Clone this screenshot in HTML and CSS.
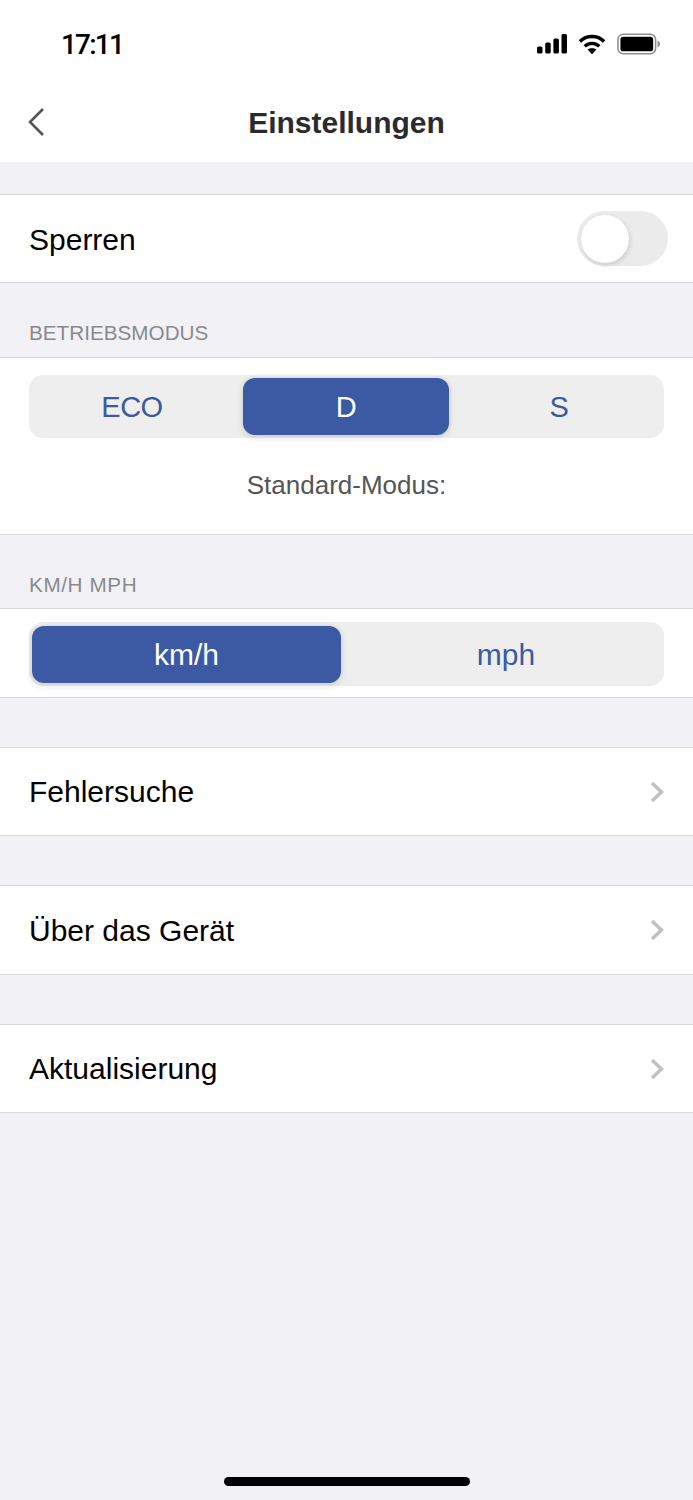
FILE: index.html
```html
<!DOCTYPE html>
<html lang="de">
<head>
    <meta charset="UTF-8">
    <meta name="viewport" content="width=device-width, initial-scale=1.0">
    <title>Einstellungen</title>
    <link rel="stylesheet" href="styles.css">
</head>
<body>
    <div class="page">
        <div class="status-bar">
            <span class="time">17:11</span>
            <div class="status-icons">
                <svg class="icon-signal" width="30" height="20" viewBox="0 0 30 20" fill="#000">
                    <rect x="0" y="12.5" width="5.5" height="7" rx="1.5"/>
                    <rect x="8.2" y="8.5" width="5.5" height="11" rx="1.5"/>
                    <rect x="16.4" y="4.5" width="5.5" height="15" rx="1.5"/>
                    <rect x="24.5" y="0" width="5.5" height="19.5" rx="1.5"/>
                </svg>
                <svg class="icon-wifi" width="28" height="21" viewBox="0 0 29 21" fill="none" stroke="#000" stroke-width="3.6">
                    <path d="M2 7.4C9.2 .6 19.8 .6 27 7.4"/>
                    <path d="M6.9 12.4c4.5-4.1 10.7-4.1 15.2 0"/>
                    <path d="M14.5 20.6l-4.6-4.8c2.6-2 6.6-2 9.2 0z" fill="#000" stroke="none"/>
                </svg>
                <svg class="icon-battery" width="43" height="22" viewBox="0 0 44 22">
                    <rect x="1" y="1" width="38.5" height="20" rx="5.5" fill="none" stroke="#8e8e8e" stroke-width="1.6"/>
                    <rect x="3.5" y="3.5" width="33.5" height="15" rx="3" fill="#000"/>
                    <path d="M41.5 7.5c1.6.5 2.5 2 2.5 3.5s-.9 3-2.5 3.5z" fill="#8e8e8e"/>
                </svg>
            </div>
        </div>

        <div class="nav-bar">
            <svg class="back" width="18" height="30" viewBox="0 0 18 30" fill="none" stroke="#555" stroke-width="2.6">
                <path d="M16 2 L3 15 L16 28"/>
            </svg>
            <h1>Einstellungen</h1>
        </div>

        <div class="section first">
            <div class="row">
                <span>Sperren</span>
                <div class="switch"><div class="knob"></div></div>
            </div>
        </div>

        <div class="section-label">BETRIEBSMODUS</div>
        <div class="section mode-box">
            <div class="segment three">
                <div class="seg-item">ECO</div>
                <div class="seg-item active">D</div>
                <div class="seg-item">S</div>
            </div>
            <p class="hint">Standard-Modus:</p>
        </div>

        <div class="section-label units">KM/H MPH</div>
        <div class="section unit-box">
            <div class="segment two">
                <div class="seg-item active">km/h</div>
                <div class="seg-item">mph</div>
            </div>
        </div>

        <div class="section spaced">
            <div class="row">
                <span>Fehlersuche</span>
                <svg class="chevron" width="14" height="22" viewBox="0 0 14 22" fill="none" stroke="#c0c0c2" stroke-width="3.4"><path d="M2 2 L11.5 11 L2 20"/></svg>
            </div>
        </div>
        <div class="section spaced">
            <div class="row tall">
                <span>Über das Gerät</span>
                <svg class="chevron" width="14" height="22" viewBox="0 0 14 22" fill="none" stroke="#c0c0c2" stroke-width="3.4"><path d="M2 2 L11.5 11 L2 20"/></svg>
            </div>
        </div>
        <div class="section spaced">
            <div class="row">
                <span>Aktualisierung</span>
                <svg class="chevron" width="14" height="22" viewBox="0 0 14 22" fill="none" stroke="#c0c0c2" stroke-width="3.4"><path d="M2 2 L11.5 11 L2 20"/></svg>
            </div>
        </div>

        <div class="home-area">
            <div class="home-bar"></div>
        </div>
    </div>
</body>
</html>
```

FILE: styles.css
```css
* {
    margin: 0;
    padding: 0;
    box-sizing: border-box;
    font-family: "Liberation Sans", Arial, sans-serif;
}

body {
    background-color: #f1f1f6;
}

.page {
    height: 1500px;
    display: flex;
    flex-direction: column;
    overflow: hidden;
}

.status-bar {
    height: 88px;
    background-color: white;
    display: flex;
    justify-content: space-between;
    align-items: center;
    padding: 0 33px 0 61px;
}

.time {
    font-family: Roboto, "Liberation Sans", sans-serif;
    font-size: 28px;
    font-weight: 500;
    color: #000;
    letter-spacing: -1.8px;
}

.status-icons {
    display: flex;
    align-items: center;
    gap: 11px;
}

.nav-bar {
    height: 74px;
    padding-bottom: 4px;
    background-color: white;
    display: flex;
    align-items: center;
    justify-content: center;
    position: relative;
}

.nav-bar h1 {
    font-size: 30px;
    font-weight: bold;
    color: #2b2b2e;
}

.back {
    position: absolute;
    left: 27px;
    top: 19px;
}

.section {
    background-color: white;
    border-top: 1px solid #d9d9dc;
    border-bottom: 1px solid #d9d9dc;
}

.section.first {
    margin-top: 32px;
}

.section.first .row span,
.row.tall span {
    padding-top: 2px;
}

.section.spaced {
    margin-top: 49px;
}

.row {
    height: 87px;
    display: flex;
    align-items: center;
    justify-content: space-between;
    padding: 0 25px 0 29px;
    font-size: 30px;
    color: #000;
}

.row.tall {
    height: 88px;
}

.chevron {
    margin-right: 4px;
}

.switch {
    width: 91px;
    height: 55px;
    border-radius: 28px;
    background-color: #ebebeb;
    padding: 4px;
}

.knob {
    width: 48px;
    height: 48px;
    border-radius: 50%;
    background-color: white;
    box-shadow: 1px 2px 5px rgba(0,0,0,0.14);
}

.section-label {
    height: 74px;
    padding: 38px 29px 0;
    font-size: 20.7px;
    line-height: 24px;
    color: #8a8a8e;
}

.section-label.units {
    height: 73px;
    letter-spacing: 0.6px;
}

.mode-box {
    height: 178px;
    padding: 17px 29px 0;
}

.unit-box {
    height: 90px;
    padding: 13px 29px 0;
}

.segment {
    background-color: #eeeeee;
    border-radius: 14px;
    display: flex;
    gap: 7px;
}

.segment.three {
    height: 63px;
    padding: 3px 2px 3px 0;
}

.segment.two {
    height: 64px;
    padding: 4px 0 3px 3px;
}

.seg-item {
    flex: 1;
    display: flex;
    align-items: center;
    justify-content: center;
    font-size: 30px;
    color: #3b5aa3;
    border-radius: 12px;
}

.three .seg-item {
    padding-top: 2px;
    font-size: 29px;
    letter-spacing: -0.5px;
}

.three .seg-item.active {
    margin-left: 1px;
}

.two .seg-item.active {
    flex: none;
    width: 309px;
}

.seg-item.active {
    background-color: #3b5aa3;
    color: white;
    box-shadow: 0 0 4px rgba(0,0,0,0.1), 0 3px 8px rgba(0,0,0,0.1);
}

.hint {
    margin-top: 33px;
    text-align: center;
    font-size: 26px;
    line-height: 28px;
    color: #555;
}

.home-area {
    margin-top: auto;
    height: 23px;
}

.home-bar {
    width: 246px;
    height: 9px;
    margin: 0 auto;
    background-color: #000;
    border-radius: 5px;
}
```
